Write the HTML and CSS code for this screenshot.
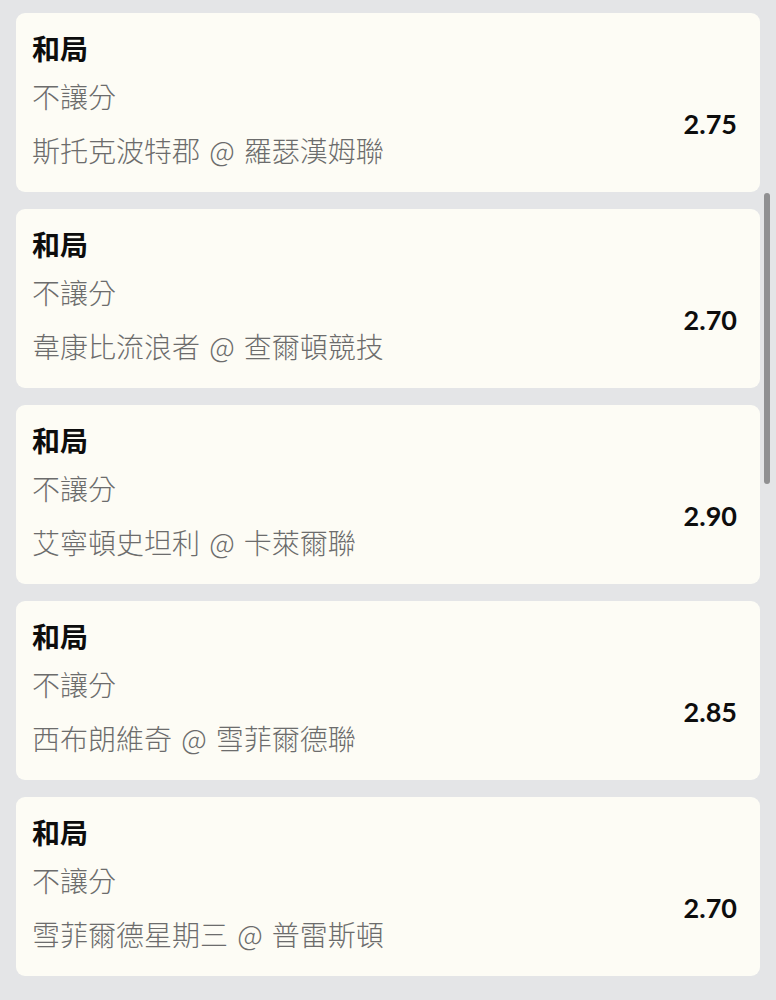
FILE: index.html
```html
<html>
<head>
<meta charset="utf-8">
<title>和局 投注</title>
<link rel="stylesheet" href="styles.css">
</head>
<body>
    <div class="lista">
        <div class="tarjeta">
            <div class="titulo">和局</div>
            <div class="fila">
                <div class="info">
                    <div class="tipo">不讓分</div>
                    <div class="equipos">斯托克波特郡 @ 羅瑟漢姆聯</div>
                </div>
                <div class="cuota">2.75</div>
            </div>
        </div>
        <div class="tarjeta">
            <div class="titulo">和局</div>
            <div class="fila">
                <div class="info">
                    <div class="tipo">不讓分</div>
                    <div class="equipos">韋康比流浪者 @ 查爾頓競技</div>
                </div>
                <div class="cuota">2.70</div>
            </div>
        </div>
        <div class="tarjeta">
            <div class="titulo">和局</div>
            <div class="fila">
                <div class="info">
                    <div class="tipo">不讓分</div>
                    <div class="equipos">艾寧頓史坦利 @ 卡萊爾聯</div>
                </div>
                <div class="cuota">2.90</div>
            </div>
        </div>
        <div class="tarjeta">
            <div class="titulo">和局</div>
            <div class="fila">
                <div class="info">
                    <div class="tipo">不讓分</div>
                    <div class="equipos">西布朗維奇 @ 雪菲爾德聯</div>
                </div>
                <div class="cuota">2.85</div>
            </div>
        </div>
        <div class="tarjeta">
            <div class="titulo">和局</div>
            <div class="fila">
                <div class="info">
                    <div class="tipo">不讓分</div>
                    <div class="equipos">雪菲爾德星期三 @ 普雷斯頓</div>
                </div>
                <div class="cuota">2.70</div>
            </div>
        </div>
    </div>
    <div class="barra"></div>
</body>
</html>
```

FILE: styles.css
```css
* {
    box-sizing: border-box;
    padding: 0px;
    margin: 0px;
}
body {
    background-color: #e4e5e7;
    font-family: "Noto Sans CJK TC", "Noto Sans", sans-serif;
    overflow: hidden;
}
.lista {
    display: flex;
    flex-direction: column;
    gap: 17px;
    padding: 13px 16px 0 16px;
}
.tarjeta {
    background-color: #fdfcf5;
    border-radius: 9px;
    height: 179px;
    padding: 18px 23px 0 16px;
}
.titulo {
    font-size: 28px;
    font-weight: bold;
    color: #0d0d0d;
    line-height: 34px;
}
.fila {
    display: flex;
    align-items: center;
    margin-top: 14px;
}
.info {
    flex: 1;
}
.tipo, .equipos {
    font-size: 28px;
    font-weight: 300;
    color: #6c6c6c;
    line-height: 34px;
}
.equipos {
    margin-top: 20px;
    word-spacing: 3px;
}
.cuota {
    font-family: "Lato", sans-serif;
    font-weight: bold;
    font-size: 27px;
    color: #0d0d0d;
}
.barra {
    position: absolute;
    left: 764px;
    top: 193px;
    width: 6px;
    height: 291px;
    border-radius: 3px;
    background-color: #909092;
}
```
